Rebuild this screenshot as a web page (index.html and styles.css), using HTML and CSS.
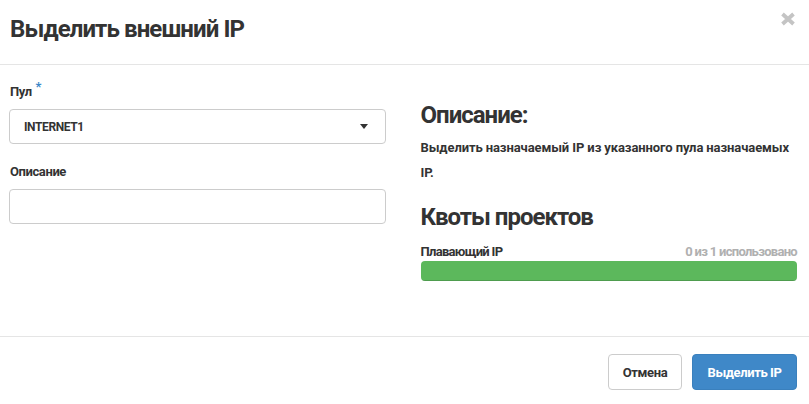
FILE: index.html
```html
<!DOCTYPE html>
<html lang="ru">
<head>
<meta charset="utf-8">
<title>Выделить внешний IP</title>
<link rel="stylesheet" href="styles.css">
</head>
<body>
<div class="modal">
  <div class="modal-header">
    <h1 class="modal-title">Выделить внешний IP</h1>
    <button class="close" aria-label="Закрыть">
      <svg width="16" height="14" viewBox="0 0 16 14"><path d="M2.5 2 L13.5 12 M13.5 2 L2.5 12" stroke="#c4c4c4" stroke-width="3.8" stroke-linecap="butt"/></svg>
    </button>
  </div>
  <div class="modal-body">
    <div class="form-col">
      <div class="field">
        <label class="label">Пул <span class="req">*</span></label>
        <div class="select">
          <span>INTERNET1</span>
          <svg class="caret" width="8" height="5" viewBox="0 0 8 5"><path d="M0 0 H8 L4 5 Z" fill="#333"/></svg>
        </div>
      </div>
      <div class="field">
        <label class="label">Описание</label>
        <div class="input"></div>
      </div>
    </div>
    <div class="info-col">
      <h3 class="heading">Описание:</h3>
      <p class="desc">Выделить назначаемый IP из указанного пула назначаемых IP.</p>
      <h3 class="heading quota-heading">Квоты проектов</h3>
      <div class="quota-row">
        <span class="quota-name">Плавающий IP</span>
        <span class="quota-used">0 из 1 использовано</span>
      </div>
      <div class="progress"><div class="progress-bar" style="width:100%"></div></div>
    </div>
  </div>
  <div class="modal-footer">
    <button class="btn btn-default">Отмена</button>
    <button class="btn btn-primary">Выделить IP</button>
  </div>
</div>
</body>
</html>
```
FILE: styles.css
```css
* { box-sizing: border-box; }
html, body { margin: 0; padding: 0; background: #fff; }
body {
  font-family: Roboto, "Liberation Sans", sans-serif;
  font-weight: bold;
  color: #333;
  font-size: 13px;
  letter-spacing: -0.4px;
}
.modal { width: 809px; height: 404px; display: flex; flex-direction: column; }
.modal-header {
  height: 65px;
  flex: none;
  border-bottom: 1px solid #e5e5e5;
  display: flex;
  justify-content: space-between;
  align-items: flex-start;
  padding: 0 13px 0 10px;
}
.modal-title {
  margin: 15px 0 0;
  font-size: 24px;
  line-height: 28px;
  font-weight: bold;
  color: #333;
  letter-spacing: -0.9px;
}
.close {
  margin-top: 12px;
  padding: 0;
  border: 0;
  background: none;
  width: 16px;
  height: 14px;
  display: block;
}
.close svg { display: block; }
.modal-body {
  flex: none;
  display: grid;
  grid-template-columns: 1fr 1fr;
  column-gap: 35px;
  padding: 18px 12px 0 9px;
  height: 272px;
  border-bottom: 1px solid #e5e5e5;
}
.field { margin-bottom: 19px; }
.label {
  display: block;
  font-size: 13px;
  line-height: 18px;
  margin: 0 0 8px 1px;
}
.req { color: #3a87c8; font-size: 13px; position: relative; top: -5px; margin-left: 1px; }
.select, .input {
  height: 35px;
  border: 1px solid #ccc;
  border-radius: 4px;
  background: #fff;
}
.select {
  display: flex;
  align-items: center;
  justify-content: space-between;
  padding: 0 17px 0 14px;
  font-size: 12px;
}
.caret { display: block; }
.info-col { padding-top: 18px; }
.heading {
  margin: 0;
  font-size: 24px;
  line-height: 28px;
  font-weight: bold;
  letter-spacing: -1px;
}
.desc {
  margin: 6px 0 0;
  font-size: 13px;
  line-height: 25px;
  letter-spacing: -0.1px;
}
.quota-heading { margin-top: 18px; }
.quota-row {
  display: flex;
  justify-content: space-between;
  margin-top: 13px;
  font-size: 13px;
  line-height: 16px;
  letter-spacing: -0.7px;
}
.quota-used { color: #b0b0b0; }
.progress {
  margin-top: 1px;
  height: 20px;
  border-radius: 4px;
  background: #f5f5f5;
  overflow: hidden;
}
.progress-bar {
  height: 100%;
  background: #5cb85c;
  box-shadow: inset 0 -1px 0 rgba(0,0,0,0.15);
}
.modal-footer {
  display: flex;
  justify-content: flex-end;
  gap: 10px;
  padding: 17px 12px 0 0;
}
.btn {
  height: 36px;
  border-radius: 4px;
  font-family: inherit;
  font-weight: bold;
  font-size: 13px;
  letter-spacing: -0.4px;
  padding: 0;
  border: 1px solid #ccc;
  white-space: nowrap;
}
.btn-default { background: #fff; color: #333; width: 74px; }
.btn-primary { background: #3f88c8; border-color: #3a80bd; color: #fff; width: 105px; }
```
